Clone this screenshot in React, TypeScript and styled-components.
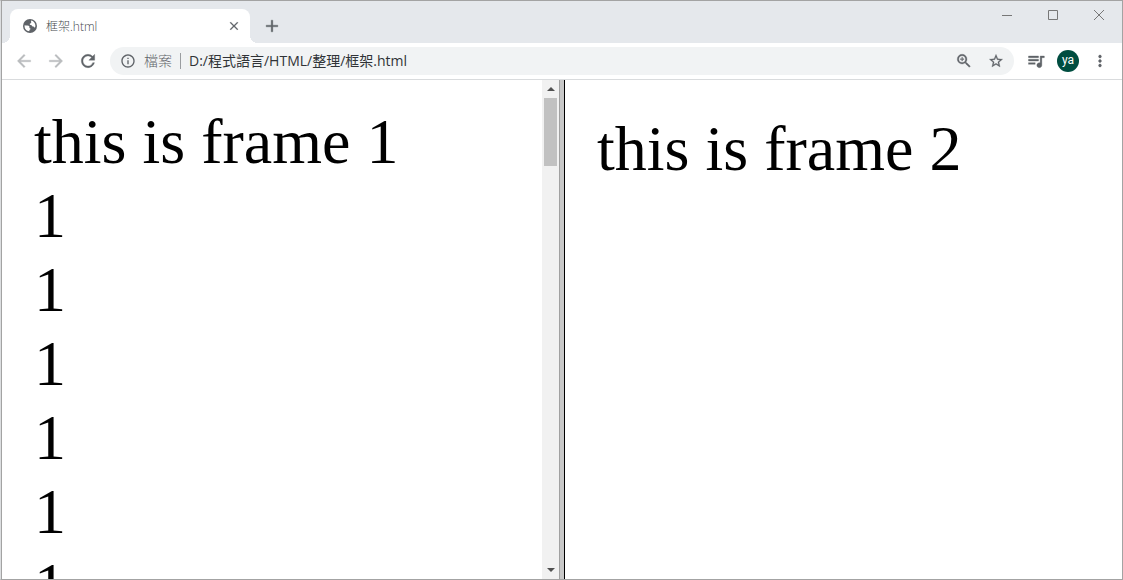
import React from 'react';
import styled, { createGlobalStyle } from 'styled-components';
import {
  MdAdd,
  MdArrowBack,
  MdArrowForward,
  MdClose,
  MdInfoOutline,
  MdMoreVert,
  MdQueueMusic,
  MdRefresh,
  MdStarBorder,
  MdZoomIn,
} from 'react-icons/md';

const GlobalStyle = createGlobalStyle`
  *, *::before, *::after { box-sizing: border-box; }
  body { margin: 0; background: #fff; }
  button, input { font: inherit; color: inherit; border: 0; padding: 0; margin: 0; background: none; }
`;

const Window = styled.div`
  display: flex;
  flex-direction: column;
  height: 100vh;
  overflow: hidden;
  padding-left: 1px;
  border: 1px solid #a3a3a3;
  border-left-color: #dcdee0;
  background: #a3a3a3;
  color: #5f6368;
  font-family: 'Open Sans', 'Noto Sans CJK TC', sans-serif;
  font-weight: 300;
`;

const TabStrip = styled.header`
  display: flex;
  align-items: flex-end;
  height: 42px;
  flex: none;
  padding-left: 8px;
  background: #e5e8ec;
`;

const Tab = styled.div`
  position: relative;
  display: flex;
  align-items: center;
  gap: 8px;
  width: 240px;
  height: 34px;
  padding: 0 8px 0 12px;
  border-radius: 8px 8px 0 0;
  background: #fff;
  &::before, &::after {
    content: '';
    position: absolute;
    bottom: 0;
    width: 8px;
    height: 8px;
  }
  &::before { right: 100%; background: radial-gradient(circle at 0 0, transparent 8px, #fff 8px); }
  &::after { left: 100%; background: radial-gradient(circle at 100% 0, transparent 8px, #fff 8px); }
`;

const TabTitle = styled.span`
  flex: 1;
  padding-top: 2px;
  color: #45494d;
  font-size: 12px;
  line-height: 16px;
`;

const IconButton = styled.button<{ $size?: number; $faded?: boolean }>`
  display: flex;
  align-items: center;
  justify-content: center;
  flex: none;
  width: ${({ $size = 28 }) => $size}px;
  height: ${({ $size = 28 }) => $size}px;
  color: ${({ $faded }) => ($faded ? '#babcbe' : '#5f6368')};
  path:not([fill='none']) { stroke-width: 0.4; }
`;

const NewTab = styled(IconButton)`
  margin: 0 0 3px 8px;
`;

const WindowControls = styled.div`
  display: flex;
  align-self: flex-start;
  margin-left: auto;
`;

const WindowButton = styled.button`
  display: flex;
  align-items: center;
  justify-content: center;
  width: 46px;
  height: 28px;
  color: #777;
`;

const Toolbar = styled.div`
  display: flex;
  align-items: center;
  flex: none;
  gap: 4px;
  height: 37px;
  padding: 0 8px;
  border-bottom: 1px solid #d9dbdd;
  background: #fff;
`;

const AddressBar = styled.div`
  display: flex;
  align-items: center;
  flex: 1;
  min-width: 0;
  height: 28px;
  margin: 0 4px;
  padding: 0 4px 0 10px;
  gap: 4px;
  border-radius: 14px;
  background: #f1f3f4;
`;

const SiteInfo = styled.button`
  display: flex;
  align-items: center;
  flex: none;
  gap: 8px;
  height: 16px;
  padding-right: 8px;
  border-right: 1px solid #9a9da0;
  font-size: 14px;
  line-height: 16px;
`;

const Url = styled.input`
  flex: 1;
  min-width: 0;
  height: 20px;
  margin-left: 4px;
  color: #303337;
  font-size: 14px;
  font-weight: 400;
  line-height: 20px;
  outline: none;
`;

const Avatar = styled.button`
  flex: none;
  width: 22px;
  height: 22px;
  margin: 0 3px;
  padding-bottom: 3px;
  border-radius: 50%;
  background: #004d40;
  color: #fff;
  font-family: Roboto, sans-serif;
  font-weight: 400;
  font-size: 12px;
  line-height: 18px;
`;

const Frames = styled.main`
  display: grid;
  grid-template-columns: 1fr 6px 1fr;
  flex: 1;
  min-height: 0;
  background: #fff;
`;

const Frame = styled.section`
  display: flex;
  min-width: 0;
  min-height: 0;
  overflow: hidden;
`;

const FrameBody = styled.div<{ $top: number }>`
  flex: 1;
  padding: ${({ $top }) => $top}px 32px 0;
  color: #000;
  font-family: 'Liberation Serif', serif;
  font-weight: 400;
  font-size: 64px;
  line-height: 74px;
  white-space: nowrap;
`;

const Line = styled.p`
  margin: 0;
`;

const Divider = styled.div`
  background: #c8c8c8;
  border-left: 1px solid #a0a0a0;
  border-right: 1px solid #000;
`;

const ScrollTrack = styled.div`
  display: flex;
  flex-direction: column;
  flex: none;
  width: 17px;
  background: #f1f1f1;
`;

const ScrollButton = styled.button`
  display: flex;
  align-items: center;
  justify-content: center;
  height: 18px;
  color: #505050;
`;

const ScrollThumb = styled.div`
  height: 68px;
  margin: 0 2px auto;
  background: #c1c1c1;
`;

const Globe = () => (
  <svg width="16" height="16" viewBox="0 0 16 16" aria-hidden="true">
    <circle cx="8" cy="8" r="7" fill="#5f6368" />
    <path
      fill="#fff"
      d="M2.6 7.2 C4.2 7.6 6.9 7.1 7.4 8.4 C7.7 9.3 6.9 9.8 7.8 10.2 C8.9 10.5 8.6 11.6 7.6 11.7 L7.2 13.2 C4.6 12.9 2.2 10.8 2.6 7.2 Z M9.2 2.6 C11.5 3 13.3 5 13.4 7.5 C13.4 8.4 13.2 9 12.9 9.7 C12.3 9.7 12.1 8.4 11.2 8.5 C10 8.6 9.5 7.9 9.6 7.1 C8.4 7.2 7.4 6.6 7.8 5.7 C8.2 5 9.3 5.3 9.2 4.4 C9.2 3.8 8.8 3.3 9.2 2.6 Z"
    />
  </svg>
);

const lines = ['this is frame 1', '1', '1', '1', '1', '1', '1'];

export default function App() {
  return (
    <Window>
      <GlobalStyle />
      <TabStrip>
        <Tab>
          <Globe />
          <TabTitle>框架.html</TabTitle>
          <IconButton $size={16} aria-label="Close tab"><MdClose size={14} /></IconButton>
        </Tab>
        <NewTab aria-label="New tab"><MdAdd size={20} /></NewTab>
        <WindowControls>
          <WindowButton aria-label="Minimize">
            <svg width="10" height="10" stroke="currentColor"><path d="M0 5.5H10" /></svg>
          </WindowButton>
          <WindowButton aria-label="Maximize">
            <svg width="10" height="10" stroke="currentColor" fill="none"><path d="M.5 .5H9.5V9.5H.5Z" /></svg>
          </WindowButton>
          <WindowButton aria-label="Close">
            <svg width="10" height="10" stroke="currentColor"><path d="M0 0L10 10M10 0L0 10" /></svg>
          </WindowButton>
        </WindowControls>
      </TabStrip>
      <Toolbar>
        <IconButton $faded aria-label="Back"><MdArrowBack size={20} /></IconButton>
        <IconButton $faded aria-label="Forward"><MdArrowForward size={20} /></IconButton>
        <IconButton aria-label="Reload"><MdRefresh size={20} /></IconButton>
        <AddressBar>
          <SiteInfo><MdInfoOutline size={16} />檔案</SiteInfo>
          <Url aria-label="Address" defaultValue="D:/程式語言/HTML/整理/框架.html" />
          <IconButton aria-label="Zoom"><MdZoomIn size={18} /></IconButton>
          <IconButton aria-label="Bookmark"><MdStarBorder size={16} /></IconButton>
        </AddressBar>
        <IconButton aria-label="Media"><MdQueueMusic size={20} /></IconButton>
        <Avatar aria-label="Profile">ya</Avatar>
        <IconButton aria-label="Menu"><MdMoreVert size={18} /></IconButton>
      </Toolbar>
      <Frames>
        <Frame>
          <FrameBody $top={25}>
            {lines.map((text, i) => <Line key={i}>{text}</Line>)}
          </FrameBody>
          <ScrollTrack>
            <ScrollButton aria-label="Scroll up">
              <svg width="8" height="4" fill="currentColor"><path d="M0 4L4 0L8 4Z" /></svg>
            </ScrollButton>
            <ScrollThumb />
            <ScrollButton aria-label="Scroll down">
              <svg width="8" height="4" fill="currentColor"><path d="M0 0L4 4L8 0Z" /></svg>
            </ScrollButton>
          </ScrollTrack>
        </Frame>
        <Divider />
        <Frame>
          <FrameBody $top={32}>
            <Line>this is frame 2</Line>
          </FrameBody>
        </Frame>
      </Frames>
    </Window>
  );
}
